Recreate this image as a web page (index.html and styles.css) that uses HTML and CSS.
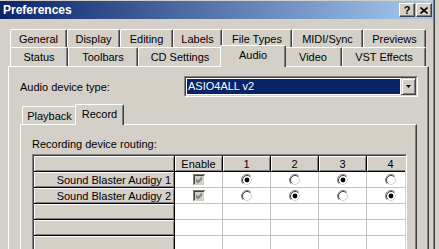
FILE: index.html
```html
<!DOCTYPE html>
<html lang="en">
<head>
  <meta charset="UTF-8">
  <title>Preferences</title>
  <link rel="stylesheet" href="styles.css">
</head>
<body>

  <svg class="defs" width="0" height="0">
    <symbol id="radio-off" viewBox="0 0 12 12">
      <circle cx="6" cy="6" r="4.5" fill="#fff"/>
      <path d="M2.11 9.89A5.5 5.5 0 0 1 9.89 2.11" stroke="#808080" fill="none"/>
      <path d="M9.89 2.11A5.5 5.5 0 0 1 2.11 9.89" stroke="#fff" fill="none"/>
      <path d="M2.82 9.18A4.5 4.5 0 0 1 9.18 2.82" stroke="#404040" fill="none"/>
      <path d="M9.18 2.82A4.5 4.5 0 0 1 2.82 9.18" stroke="#d4d0c8" fill="none"/>
    </symbol>
    <symbol id="radio-on" viewBox="0 0 12 12">
      <use href="#radio-off"/>
      <circle cx="6" cy="6" r="2.4" fill="#000"/>
    </symbol>
    <symbol id="check-off" viewBox="0 0 12 12">
      <path d="M0 0h12v1H1v11H0z" fill="#808080"/>
      <path d="M1 1h10v1H2v9H1z" fill="#404040"/>
      <path d="M11 1h1v11H0v-1h11z" fill="#fff"/>
      <path d="M10 2h1v9H1v-1h9z" fill="#d4d0c8"/>
      <rect x="2" y="2" width="8" height="8" fill="#d4d0c8"/>
      <polygon points="3,4.5 5,6.5 9,2.5 9,5.5 5,9.5 3,7.5" fill="#808080"/>
    </symbol>
  </svg>

  <div class="window">
    <div class="titlebar">
      <span class="title">Preferences</span>
      <div class="caption-btns">
        <button class="cap-btn">?</button>
        <button class="cap-btn">
          <svg width="8" height="7" viewBox="0 0 8 7"><path d="M0.5 0.5L7.5 6.5M7.5 0.5L0.5 6.5" stroke="#000" stroke-width="1.6"/></svg>
        </button>
      </div>
    </div>

    <div class="tabctl">
      <div class="tabrow row-back">
        <div class="tab">General</div>
        <div class="tab">Display</div>
        <div class="tab">Editing</div>
        <div class="tab">Labels</div>
        <div class="tab">File Types</div>
        <div class="tab">MIDI/Sync</div>
        <div class="tab">Previews</div>
      </div>
      <div class="tabrow row-front">
        <div class="tab">Status</div>
        <div class="tab">Toolbars</div>
        <div class="tab">CD Settings</div>
        <div class="tab selected">Audio</div>
        <div class="tab">Video</div>
        <div class="tab">VST Effects</div>
      </div>

      <div class="panel">
        <div class="field">
          <span>Audio device type:</span>
          <div class="combo">
            <div class="combo-inner">
              <div class="combo-value">ASIO4ALL v2</div>
              <div class="combo-btn">
                <svg width="5" height="3" viewBox="0 0 5 3"><polygon points="0,0 5,0 2.5,3" fill="#000"/></svg>
              </div>
            </div>
          </div>
        </div>

        <div class="tabrow sub-row">
          <div class="tab">Playback</div>
          <div class="tab selected">Record</div>
        </div>
        <div class="subpanel">
          <div class="caption">Recording device routing:</div>
          <div class="grid-frame">
            <div class="grid">
              <div class="cell fixed"></div>
              <div class="cell fixed">Enable</div>
              <div class="cell fixed">1</div>
              <div class="cell fixed">2</div>
              <div class="cell fixed">3</div>
              <div class="cell fixed">4</div>

              <div class="cell fixed rowhead">Sound Blaster Audigy 1</div>
              <div class="cell"><svg class="check"><use href="#check-off"/></svg></div>
              <div class="cell"><svg class="radio"><use href="#radio-on"/></svg></div>
              <div class="cell"><svg class="radio"><use href="#radio-off"/></svg></div>
              <div class="cell"><svg class="radio"><use href="#radio-on"/></svg></div>
              <div class="cell"><svg class="radio"><use href="#radio-off"/></svg></div>

              <div class="cell fixed rowhead">Sound Blaster Audigy 2</div>
              <div class="cell"><svg class="check"><use href="#check-off"/></svg></div>
              <div class="cell"><svg class="radio"><use href="#radio-off"/></svg></div>
              <div class="cell"><svg class="radio"><use href="#radio-on"/></svg></div>
              <div class="cell"><svg class="radio"><use href="#radio-off"/></svg></div>
              <div class="cell"><svg class="radio"><use href="#radio-on"/></svg></div>

              <div class="cell fixed rowhead"></div>
              <div class="cell"></div><div class="cell"></div><div class="cell"></div><div class="cell"></div><div class="cell"></div>
              <div class="cell fixed rowhead"></div>
              <div class="cell"></div><div class="cell"></div><div class="cell"></div><div class="cell"></div><div class="cell"></div>
              <div class="cell fixed rowhead"></div>
              <div class="cell"></div><div class="cell"></div><div class="cell"></div><div class="cell"></div><div class="cell"></div>
            </div>
          </div>
        </div>
      </div>
    </div>
  </div>

</body>
</html>
```

FILE: styles.css
```css
body {
  margin: 0;
  width: 439px;
  height: 249px;
  overflow: hidden;
  background: #d4d0c8;
  font-family: "Liberation Sans", Arial, sans-serif;
  font-size: 11px;
  color: #000;
}

.defs {
  display: block;
  height: 0;
}

.window {
  width: 433px;
  height: 248px;
  padding-top: 1px;
  border-right: 1px solid #808080;
  box-shadow: 1px 0 0 #404040;
  overflow: hidden;
}

/* barre de titre */
.titlebar {
  height: 18px;
  display: flex;
  align-items: center;
  justify-content: space-between;
  padding: 0 1px 0 3px;
  background: linear-gradient(to right, #0a246a, #a6caf0);
}

.title {
  color: #fff;
  font-weight: bold;
  font-size: 12px;
}

.caption-btns {
  display: flex;
  gap: 1px;
}

.cap-btn {
  width: 16px;
  height: 14px;
  padding: 0;
  box-sizing: border-box;
  display: flex;
  align-items: center;
  justify-content: center;
  background: #d4d0c8;
  border: 1px solid;
  border-color: #fff #404040 #404040 #fff;
  box-shadow: inset -1px -1px #808080;
  font: bold 11px "Liberation Sans", Arial, sans-serif;
  line-height: 12px;
}

/* onglets */
.tabctl {
  margin: 10px 0 0 8px;
  width: 421px;
}

.tabrow {
  display: grid;
  padding: 0 2px;
}

.row-back {
  grid-template-columns: 57px 53px 53px 49px 70px 71px 63px;
}

.row-front {
  grid-template-columns: 58px 70px 84px 62px 58px 84px;
}

.sub-row {
  margin-top: 9px;
  grid-template-columns: 55px 45px;
}

.tab {
  height: 18px;
  box-sizing: border-box;
  padding-top: 2px;
  line-height: 14px;
  text-align: center;
  white-space: nowrap;
  background: #d4d0c8;
  border-left: 1px solid #fff;
  border-top: 1px solid #fff;
  border-right: 1px solid #404040;
  border-radius: 2px 2px 0 0;
  box-shadow: inset -1px 0 #808080;
}

.row-front .tab {
  height: 19px;
}

.tab.selected {
  position: relative;
  z-index: 1;
  margin: -2px -2px -1px;
  height: 21px;
}

.row-front .tab.selected {
  height: 22px;
}

.panel,
.subpanel {
  border-left: 1px solid #fff;
  border-top: 1px solid #fff;
  border-right: 1px solid #404040;
  box-shadow: inset -1px 0 #808080;
  height: 220px;
}

.panel {
  padding: 0 11px;
}

.subpanel {
  padding: 12px 11px 0;
}

/* liste déroulante */
.field {
  display: flex;
  align-items: center;
  justify-content: space-between;
  height: 21px;
  margin: 9px -1px 0 0;
}

.combo {
  width: 234px;
  height: 21px;
  box-sizing: border-box;
  border: 1px solid;
  border-color: #808080 #fff #fff #808080;
}

.combo-inner {
  height: 100%;
  box-sizing: border-box;
  display: flex;
  background: #fff;
  border: 1px solid;
  border-color: #404040 #d4d0c8 #d4d0c8 #404040;
}

.combo-value {
  flex: 1;
  margin: 1px;
  padding-left: 1px;
  background: #0a246a;
  color: #fff;
  line-height: 15px;
}

.combo-btn {
  width: 15px;
  box-sizing: border-box;
  display: flex;
  align-items: center;
  justify-content: center;
  background: #d4d0c8;
  border: 1px solid;
  border-color: #d4d0c8 #404040 #404040 #d4d0c8;
  box-shadow: inset 1px 1px #fff, inset -1px -1px #808080;
}

/* grille de routage */
.caption {
  line-height: 14px;
}

.grid-frame {
  margin-top: 3px;
  width: 375px;
  box-sizing: border-box;
  border: 1px solid;
  border-color: #808080 #fff #fff #808080;
}

.grid {
  display: grid;
  grid-template-columns: 141px repeat(5, 48px);
  grid-auto-rows: 16px;
  overflow: hidden;
  border: 1px solid;
  border-color: #404040 #d4d0c8 #d4d0c8 #404040;
}

.cell {
  box-sizing: border-box;
  display: flex;
  align-items: center;
  justify-content: center;
  background: #fff;
  border-right: 1px solid #c0c0c0;
  border-bottom: 1px solid #c0c0c0;
  line-height: 14px;
  white-space: nowrap;
}

.cell.fixed {
  background: #d4d0c8;
  border-right-color: #000;
  border-bottom-color: #000;
  box-shadow: inset 1px 1px #fff, inset -1px -1px #808080;
}

.cell.rowhead {
  justify-content: flex-end;
  padding-right: 3px;
}

.radio {
  width: 12px;
  height: 12px;
}

.check {
  width: 12px;
  height: 12px;
}
```
